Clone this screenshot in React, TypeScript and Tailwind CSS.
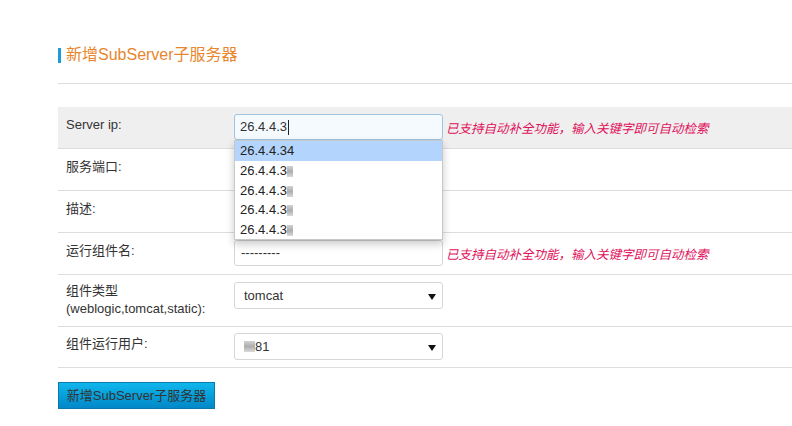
import React from "react";

const font = { fontFamily: '"Liberation Sans", "Noto Sans CJK SC", Arial, sans-serif' };

function Blur({ w = 8 }: { w?: number }) {
  return (
    <span
      className="inline-block align-middle h-[11px] bg-gradient-to-b from-[#c8c8c8] via-[#9a9a9a] to-[#d0d0d0] blur-[0.6px] opacity-80"
      style={{ width: w }}
    />
  );
}

function Hint() {
  return (
    <span className="ml-[3px] text-[12.5px] italic text-[#e0105a] whitespace-nowrap">
      已支持自动补全功能，输入关键字即可自动检索
    </span>
  );
}

function Arrow() {
  return (
    <svg width="8" height="6" viewBox="0 0 8 6" className="absolute right-[6px] top-[11px]">
      <path d="M0 0 L8 0 L4 6 Z" fill="#111" />
    </svg>
  );
}

export default function App() {
  return (
    <div className="w-[792px] h-[426px] bg-white text-[13px] text-[#333] overflow-hidden" style={font}>
      <div className="pl-[58px] pt-[47px]">
        <div className="flex items-center h-[16px]">
          <div className="w-[3px] h-[15px] bg-[#1e9ad6]" />
          <div className="ml-[5px] text-[16px] text-[#e8862d] leading-[16px]">新增SubServer子服务器</div>
        </div>
        <div className="mt-[20px] h-px bg-[#dddddd]" />

        <div className="mt-[23px]">
          {/* Row 1 */}
          <div className="flex h-[42px] bg-[#efefef] border-b border-[#dddddd]">
            <div className="w-[176px] pl-[8px] pt-[8px] leading-[20px]">Server ip:</div>
            <div className="relative flex items-start pt-[7px]">
              <div className="w-[209px] h-[26px] rounded-[3px] border border-[#9ec4e2] bg-[#f5faff] flex items-center pl-[5px] text-[13px] text-[#333]">
                26.4.4.3<span className="inline-block w-px h-[15px] bg-[#222] ml-px" />
              </div>
              <div className="mt-[5px]"><Hint /></div>
              <div className="absolute left-0 top-[33px] w-[209px] bg-white border border-[#c8c8c8] shadow-[0_4px_8px_rgba(0,0,0,0.22)] z-10 text-[13px] text-[#222]">
                <div className="h-[20px] leading-[20px] pl-[5px] bg-[#b3d4fc]">26.4.4.34</div>
                <div className="h-[19.5px] leading-[19.5px] pl-[5px]">26.4.4.3<Blur w={6} /></div>
                <div className="h-[19.5px] leading-[19.5px] pl-[5px]">26.4.4.3<Blur w={6} /></div>
                <div className="h-[19.5px] leading-[19.5px] pl-[5px]">26.4.4.3<Blur w={6} /></div>
                <div className="h-[19.5px] leading-[19.5px] pl-[5px]">26.4.4.3<Blur w={6} /></div>
              </div>
            </div>
          </div>
          {/* Row 2 */}
          <div className="flex h-[42px] border-b border-[#dddddd]">
            <div className="w-[176px] pl-[8px] pt-[8px] leading-[20px]">服务端口:</div>
          </div>
          {/* Row 3 */}
          <div className="flex h-[42px] border-b border-[#dddddd]">
            <div className="w-[176px] pl-[8px] pt-[8px] leading-[20px]">描述:</div>
          </div>
          {/* Row 4 */}
          <div className="flex h-[42px] border-b border-[#dddddd]">
            <div className="w-[176px] pl-[8px] pt-[8px] leading-[20px]">运行组件名:</div>
            <div className="flex items-start pt-[7px]">
              <div className="w-[209px] h-[26px] rounded-[3px] border border-[#d6d6d6] bg-white flex items-center pl-[6px] text-[13px] text-[#333]">
                ---------
              </div>
              <div className="mt-[5px]"><Hint /></div>
            </div>
          </div>
          {/* Row 5 */}
          <div className="flex h-[52px] border-b border-[#dddddd]">
            <div className="w-[176px] pl-[8px] pt-[7px] leading-[18px]">
              <div>组件类型</div>
              <div>(weblogic,tomcat,static):</div>
            </div>
            <div className="pt-[7px]">
              <div className="relative w-[209px] h-[27px] rounded-[3px] border border-[#d6d6d6] bg-white flex items-center pl-[9px] text-[13px] text-[#333]">
                tomcat
                <Arrow />
              </div>
            </div>
          </div>
          {/* Row 6 */}
          <div className="flex h-[41px] border-b border-[#dddddd]">
            <div className="w-[176px] pl-[8px] pt-[7px] leading-[20px]">组件运行用户:</div>
            <div className="pt-[6px]">
              <div className="relative w-[209px] h-[27px] rounded-[3px] border border-[#d6d6d6] bg-white flex items-center pl-[9px] text-[13px] text-[#333]">
                <Blur w={11} />81
                <Arrow />
              </div>
            </div>
          </div>
        </div>

        <div className="mt-[14px]">
          <button
            className="w-[157px] h-[27px] border border-[#0a78a8] bg-gradient-to-b from-[#10b6ec] to-[#0288c8] text-[13px] text-[#333] leading-[25px]"
            style={font}
          >
            新增SubServer子服务器
          </button>
        </div>
      </div>
    </div>
  );
}
